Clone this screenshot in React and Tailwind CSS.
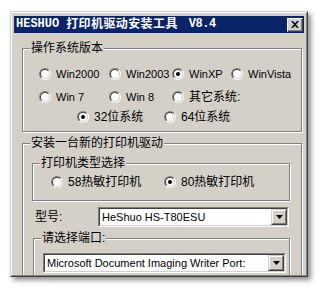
import React from 'react'

const cjk = { fontFamily: '"Liberation Sans", "Noto Sans CJK SC", sans-serif' }

function Radio({ checked }) {
  return (
    <span className="w-[12px] h-[12px] shrink-0 rounded-full border border-t-[#808080] border-l-[#808080] border-r-white border-b-white">
      <span className="flex items-center justify-center w-full h-full rounded-full border border-t-[#404040] border-l-[#404040] border-r-[#d4d0c8] border-b-[#d4d0c8] bg-white">
        {checked && <span className="w-[4px] h-[4px] rounded-full bg-black" />}
      </span>
    </span>
  )
}

function Option({ label, checked, w, latin }) {
  return (
    <div className={`flex items-center gap-[5px] ${w}`}>
      <Radio checked={checked} />
      <span className={`${latin ? 'text-[11px]' : 'text-[12px]'} leading-[14px] text-black whitespace-nowrap`} style={cjk}>{label}</span>
    </div>
  )
}

function Group({ label, className, children }) {
  return (
    <div className={`relative border border-[#808080] shadow-[1px_1px_0_#fff,inset_1px_1px_0_#fff] ${className}`}>
      <span className="absolute left-[7px] -top-[8px] px-[1px] bg-[#d4d0c8] text-[12px] leading-[14px] text-black whitespace-nowrap" style={cjk}>
        {label}
      </span>
      {children}
    </div>
  )
}

function Combo({ value, className }) {
  return (
    <div className={`h-[20px] border border-t-[#808080] border-l-[#808080] border-r-white border-b-white ${className}`}>
      <div className="flex h-full border border-t-[#404040] border-l-[#404040] border-r-[#d4d0c8] border-b-[#d4d0c8] bg-white">
        <span className="flex-1 px-[2px] text-[11px] leading-[16px] text-black whitespace-nowrap overflow-hidden" style={{ fontFamily: '"Liberation Sans", sans-serif' }}>
          {value}
        </span>
        <span className="w-[16px] h-full border border-t-[#d4d0c8] border-l-[#d4d0c8] border-r-[#404040] border-b-[#404040]">
          <span className="flex items-center justify-center w-full h-full bg-[#d4d0c8] border border-t-white border-l-white border-r-[#808080] border-b-[#808080]">
            <svg width="7" height="4" viewBox="0 0 7 4"><path d="M0 0h7L3.5 4z" fill="#000" /></svg>
          </span>
        </span>
      </div>
    </div>
  )
}

export default function App() {
  return (
    <div className="w-[321px] h-[288px] bg-white overflow-hidden pt-[11px] pl-[10px]">
      <div className="w-[298px] h-[266px] border border-t-[#d4d0c8] border-l-[#d4d0c8] border-r-[#404040] border-b-[#404040] shadow-[3px_3px_5px_rgba(0,0,0,0.45)]">
        <div className="flex flex-col h-full bg-[#d4d0c8] border border-t-white border-l-white border-r-[#808080] border-b-[#808080] px-[2px] pt-[3px] overflow-hidden">
          <div className="flex items-center h-[17px] shrink-0 bg-[#0a246a] pl-[2px] pr-[1px]">
            <span className="text-[12px] font-bold text-white leading-[17px] whitespace-nowrap" style={{ fontFamily: '"Liberation Mono", monospace' }}>HESHUO</span>
            <span className="ml-[7px] text-[12px] font-bold text-white leading-[17px] tracking-[0.4px] whitespace-nowrap" style={cjk}>打印机驱动安装工具</span>
            <span className="ml-[11px] text-[12px] font-bold text-white leading-[17px] tracking-[-0.5px] whitespace-nowrap" style={{ fontFamily: '"Liberation Mono", monospace' }}>V8.4</span>
            <span className="ml-auto w-[16px] h-[14px] border border-t-white border-l-white border-r-[#404040] border-b-[#404040] bg-[#d4d0c8]">
              <span className="flex items-center justify-center w-full h-full border-r border-b border-[#808080]">
                <svg width="8" height="7" viewBox="0 0 8 7"><path d="M0 0h2l2 2.2L6 0h2L5 3.5 8 7H6L4 4.8 2 7H0l3-3.5z" fill="#000" /></svg>
              </span>
            </span>
          </div>

          <div className="flex-1 overflow-hidden">
            <Group label="操作系统版本" className="mt-[15px] ml-[8px] w-[280px] h-[84px] pt-[18px] pl-[16px]">
              <div className="flex h-[14px]">
                <Option label="Win2000" latin w="w-[70px]" />
                <Option label="Win2003" latin w="w-[63px]" />
                <Option label="WinXP" latin checked w="w-[59px]" />
                <Option label="WinVista" latin w="w-[60px]" />
              </div>
              <div className="flex h-[14px] mt-[9px]">
                <Option label="Win 7" latin w="w-[70px]" />
                <Option label="Win 8" latin w="w-[63px]" />
                <Option label="其它系统:" w="w-[90px]" />
              </div>
              <div className="flex h-[14px] mt-[6px] pl-[38px]">
                <Option label="32位系统" checked w="w-[87px]" />
                <Option label="64位系统" w="w-[80px]" />
              </div>
            </Group>

            <Group label="安装一台新的打印机驱动" className="mt-[11px] ml-[8px] w-[280px] h-[160px]">
              <Group label="打印机类型选择" className="mt-[19px] ml-[9px] w-[258px] h-[38px] pt-[11px] pl-[18px]">
                <div className="flex h-[14px]">
                  <Option label="58热敏打印机" w="w-[113px]" />
                  <Option label="80热敏打印机" checked w="w-[110px]" />
                </div>
              </Group>

              <div className="flex items-center mt-[6px] pl-[12px]">
                <span className="w-[63px] text-[12px] leading-[14px] text-black" style={cjk}>型号:</span>
                <Combo value="HeShuo HS-T80ESU" className="w-[191px]" />
              </div>

              <Group label="请选择端口:" className="mt-[11px] ml-[10px] w-[257px] h-[60px] pt-[14px] pl-[9px]">
                <Combo value="Microsoft Document Imaging Writer Port:" className="w-[243px]" />
              </Group>
            </Group>
          </div>
        </div>
      </div>
    </div>
  )
}
